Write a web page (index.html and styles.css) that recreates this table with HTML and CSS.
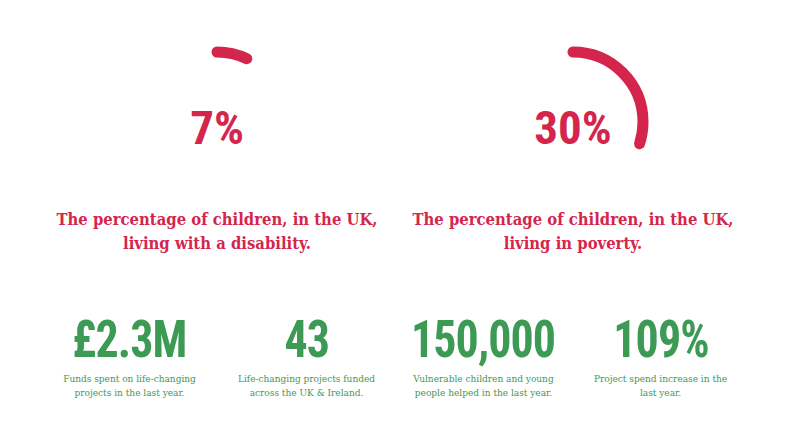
FILE: index.html
```html
<!DOCTYPE html>
<html lang="en">
<head>
<meta charset="utf-8">
<title>Impact</title>
<link rel="stylesheet" href="styles.css">
</head>
<body>
<main class="wrap">
  <section class="charts">
    <div class="chart">
      <div class="ring">
        <svg class="ring-svg" width="160" height="160" viewBox="0 0 160 160">
          <circle cx="80" cy="80" r="70" fill="none" stroke="#d4264c" stroke-width="11" stroke-linecap="round" stroke-dasharray="30.8 440" transform="rotate(-90 80 80)"/>
        </svg>
        <span class="ring-label">7%</span>
      </div>
      <p class="caption">The percentage of children, in the UK, living with a disability.</p>
    </div>
    <div class="chart">
      <div class="ring">
        <svg class="ring-svg" width="160" height="160" viewBox="0 0 160 160">
          <circle cx="80" cy="80" r="70" fill="none" stroke="#d4264c" stroke-width="11" stroke-linecap="round" stroke-dasharray="131.9 440" transform="rotate(-90 80 80)"/>
        </svg>
        <span class="ring-label">30%</span>
      </div>
      <p class="caption">The percentage of children, in the UK, living in poverty.</p>
    </div>
  </section>
  <section class="stats">
    <div class="stat">
      <div class="stat-num"><span class="num">£2.3M</span></div>
      <p class="stat-desc">Funds spent on life-changing projects in the last year.</p>
    </div>
    <div class="stat">
      <div class="stat-num"><span class="num">43</span></div>
      <p class="stat-desc">Life-changing projects funded across the UK &amp; Ireland.</p>
    </div>
    <div class="stat">
      <div class="stat-num"><span class="num">150,000</span></div>
      <p class="stat-desc">Vulnerable children and young people helped in the last year.</p>
    </div>
    <div class="stat">
      <div class="stat-num"><span class="num">109%</span></div>
      <p class="stat-desc">Project spend increase in the last year.</p>
    </div>
  </section>
</main>
</body>
</html>
```
FILE: styles.css
```css
html, body {
  margin: 0;
  padding: 0;
  background: #ffffff;
}
body {
  font-family: "DejaVu Serif Condensed", "DejaVu Serif", serif;
}
.wrap {
  width: 708px;
  margin-left: 41px;
  padding-top: 42px;
}
.charts {
  display: grid;
  grid-template-columns: 352px 352px;
  gap: 4px;
}
.chart {
  display: flex;
  flex-direction: column;
  align-items: center;
}
.ring {
  position: relative;
  width: 160px;
  height: 160px;
}
.ring-svg {
  display: block;
}
.ring-label {
  position: absolute;
  left: 0;
  right: 0;
  top: 61px;
  text-align: center;
  font-family: "Roboto Condensed", "DejaVu Sans Condensed", sans-serif;
  font-weight: 700;
  font-size: 47px;
  line-height: 50px;
  color: #d4264c;
}
.caption {
  margin: 6px 0 0;
  width: 345px;
  text-align: center;
  color: #d4264c;
  font-weight: 700;
  font-size: 16.5px;
  line-height: 24px;
}
.stats {
  display: grid;
  grid-template-columns: repeat(4, 177px);
  margin-top: 59px;
}
.stat {
  display: flex;
  flex-direction: column;
  align-items: center;
  text-align: center;
}
.stat-num {
  font-family: "Roboto Condensed", "DejaVu Sans Condensed", sans-serif;
  font-weight: 700;
  font-size: 51px;
  line-height: 50px;
  color: #3c9a55;
  white-space: nowrap;
}
.num {
  display: inline-block;
  letter-spacing: -1px;
  transform: scaleX(0.9);
}
.stat-desc {
  margin: 7px 0 0;
  width: 150px;
  color: #3c9a55;
  font-size: 10px;
  line-height: 14px;
}
```
